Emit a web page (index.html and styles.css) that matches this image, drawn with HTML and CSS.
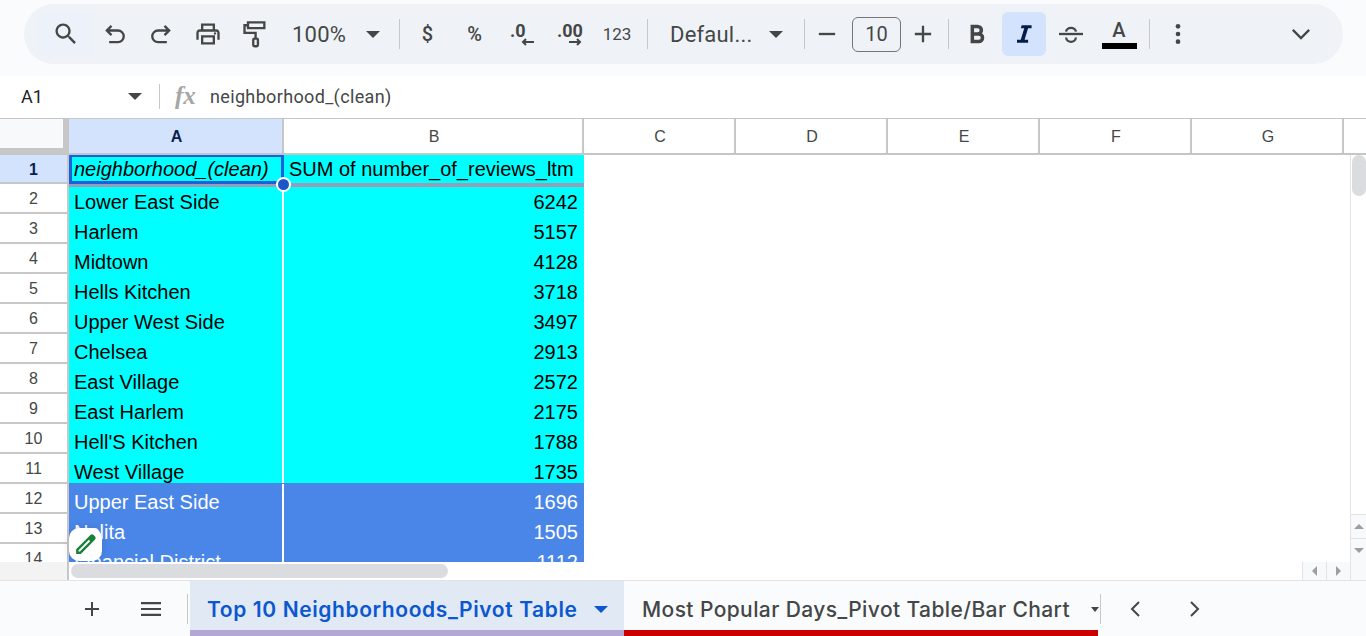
FILE: index.html
```html
<!DOCTYPE html>
<html lang="en">

<head>
    <meta charset="UTF-8">
    <title>Top 10 Neighborhoods</title>
    <link rel="stylesheet" href="styles.css">
</head>

<body>

    <div class="topBar">
        <div class="toolbar">
            <div class="btn searchBtn">
                <svg viewBox="0 0 24 24" class="icon"><path d="M15.5 14h-.79l-.28-.27C15.41 12.59 16 11.11 16 9.5 16 5.91 13.09 3 9.5 3S3 5.91 3 9.5 5.91 16 9.5 16c1.61 0 3.09-.59 4.23-1.57l.27.28v.79l5 4.99L20.49 19l-4.99-5zm-6 0C7.01 14 5 11.99 5 9.5S7.01 5 9.5 5 14 7.01 14 9.5 11.99 14 9.5 14z"/></svg>
            </div>
            <div class="btn undoBtn">
                <svg viewBox="0 0 24 24" class="icon line"><path d="M9 5L5 9l4 4M5 9h9.5a4.5 4.5 0 0 1 0 10H7"/></svg>
            </div>
            <div class="btn redoBtn">
                <svg viewBox="0 0 24 24" class="icon line"><path d="M15 5l4 4-4 4M19 9H9.500a4.500 4.500 0 0 0 0 10H17"/></svg>
            </div>
            <div class="btn printBtn">
                <svg viewBox="0 0 24 24" class="icon"><path d="M19 8h-1V3H6v5H5c-1.660 0-3 1.340-3 3v6h4v4h12v-4h4v-6c0-1.660-1.340-3-3-3zM8 5h8v3H8V5zm8 14H8v-4h8v4zm2-2v-4H6v4H4v-6c0-.55.45-1 1-1h14c.55 0 1 .45 1 1v6h-2z"/><circle cx="18" cy="11.500" r="1"/></svg>
            </div>
            <div class="btn rollerBtn">
                <svg viewBox="0 0 24 24" class="icon line"><path d="M6 2h14v5H6zM6 4.500H3V11h9.500v5"/><rect x="10.500" y="16" width="4" height="6.500" rx="1"/></svg>
            </div>
            <div class="select zoomSelect"><span>100%</span><i class="caret"></i></div>
            <div class="sep sepZoom"></div>
            <div class="btn numBtn">$</div>
            <div class="btn numBtn">%</div>
            <div class="btn numBtn decBtn"><span class="decDigits">.0</span><svg viewBox="0 0 14 8" class="decArrow"><path d="M13 4H2M5 1L2 4l3 3"/></svg></div>
            <div class="btn numBtn decBtn"><span class="decDigits">.00</span><svg viewBox="0 0 14 8" class="decArrow"><path d="M1 4h11M9 1l3 3-3 3"/></svg></div>
            <div class="btn numBtn fmtBtn">123</div>
            <div class="sep sepFmt"></div>
            <div class="select fontSelect"><span>Defaul...</span><i class="caret"></i></div>
            <div class="sep sepFont"></div>
            <div class="btn minusBtn">
                <svg viewBox="0 0 24 24" class="icon"><path d="M5 11h14v2H5z"/></svg>
            </div>
            <div class="sizeBox">10</div>
            <div class="btn plusBtn">
                <svg viewBox="0 0 24 24" class="icon"><path d="M11 5h2v6h6v2h-6v6h-2v-6H5v-2h6z"/></svg>
            </div>
            <div class="sep sepSize"></div>
            <div class="btn boldBtn">
                <svg viewBox="0 0 24 24" class="icon line thick"><path d="M8 5.500h4.500a3.250 3.250 0 0 1 0 6.500H8zM8 12h5.500a3.250 3.250 0 0 1 0 6.500H8z"/></svg>
            </div>
            <div class="btn italicBtn">
                <svg viewBox="0 0 24 24" class="icon"><path d="M10 4.500h8.500V7h-3l-3 10h3v2.500H6V17h3.200l3-10H9.300z"/></svg>
            </div>
            <div class="btn strikeBtn">
                <svg viewBox="0 0 24 24" class="icon"><path d="M1.700 11h20.600v2H1.700z"/><path class="strikeArc" d="M7.800 10C8 8 10 6.800 12 6.800s4 1.200 4.200 3.200M7.800 15c.2 2.200 2.200 3.700 4.200 3.700s4-1.500 4.200-3.700"/></svg>
            </div>
            <div class="btn colorBtn">
                <span class="colorLetter">A</span>
                <span class="colorBar"></span>
            </div>
            <div class="sep sepColor"></div>
            <div class="btn moreBtn">
                <svg viewBox="0 0 24 24" class="icon"><circle cx="12" cy="5.400" r="2"/><circle cx="12" cy="12" r="2"/><circle cx="12" cy="18.600" r="2"/></svg>
            </div>
            <div class="btn collapseBtn">
                <svg viewBox="0 0 24 24" class="icon line"><path d="M5 8.500l7 7 7-7"/></svg>
            </div>
        </div>
    </div>

    <div class="formulaBar">
        <div class="nameBox">A1</div>
        <i class="caret"></i>
        <div class="sep sepName"></div>
        <span class="fx">fx</span>
        <span class="formulaText">neighborhood_(clean)</span>
    </div>

    <div class="sheet">
        <div class="colHeads">
            <div class="corner"></div>
            <div class="colHead colA">A</div>
            <div class="colHead colB">B</div>
            <div class="colHead">C</div>
            <div class="colHead">D</div>
            <div class="colHead">E</div>
            <div class="colHead">F</div>
            <div class="colHead">G</div>
        </div>

        <div class="body">
            <div class="rowHeads">
                <div class="rowHead rowHeadFirst">1</div>
                <div class="rowHead">2</div>
                <div class="rowHead">3</div>
                <div class="rowHead">4</div>
                <div class="rowHead">5</div>
                <div class="rowHead">6</div>
                <div class="rowHead">7</div>
                <div class="rowHead">8</div>
                <div class="rowHead">9</div>
                <div class="rowHead">10</div>
                <div class="rowHead">11</div>
                <div class="rowHead">12</div>
                <div class="rowHead">13</div>
                <div class="rowHead">14</div>
            </div>

            <div class="cells">
                <div class="cell head selected"><em>neighborhood_(clean)</em></div>
                <div class="cell head">SUM of number_of_reviews_ltm</div>

                <div class="cell second">Lower East Side</div><div class="cell second num">6242</div>
                <div class="cell">Harlem</div><div class="cell num">5157</div>
                <div class="cell">Midtown</div><div class="cell num">4128</div>
                <div class="cell">Hells Kitchen</div><div class="cell num">3718</div>
                <div class="cell">Upper West Side</div><div class="cell num">3497</div>
                <div class="cell">Chelsea</div><div class="cell num">2913</div>
                <div class="cell">East Village</div><div class="cell num">2572</div>
                <div class="cell">East Harlem</div><div class="cell num">2175</div>
                <div class="cell">Hell'S Kitchen</div><div class="cell num">1788</div>
                <div class="cell">West Village</div><div class="cell num">1735</div>
                <div class="cell blue blueFirst">Upper East Side</div><div class="cell blue blueFirst num">1696</div>
                <div class="cell blue">Nolita</div><div class="cell blue num">1505</div>
                <div class="cell blue">Financial District</div><div class="cell blue num">1112</div>
            </div>

            <div class="vScroll">
                <div class="vThumb"></div>
                <div class="vArrows">
                    <div class="vArrow"><i class="tri triUp"></i></div>
                    <div class="vArrow"><i class="tri triDown"></i></div>
                </div>
            </div>

            <div class="fillHandle"></div>
            <div class="pencil">
                <svg viewBox="0 0 24 24"><path d="M3 21v-4.500L16.500 3a2.500 2.500 0 0 1 3.500 0l1 1a2.500 2.500 0 0 1 0 3.500L7.500 21zM5.300 18.700h1.300L16.500 8.800l-1.300-1.300-9.900 9.900z"/></svg>
            </div>
        </div>

        <div class="hScroll">
            <div class="hGutter"></div>
            <div class="hTrack"><div class="hThumb"></div></div>
            <div class="hArrow"><i class="tri triLeft"></i></div>
            <div class="hArrow"><i class="tri triRight"></i></div>
            <div class="hEnd"></div>
        </div>
    </div>

    <div class="tabBar">
        <div class="btn addSheet">
            <svg viewBox="0 0 24 24" class="icon"><path d="M11 5h2v6h6v2h-6v6h-2v-6H5v-2h6z"/></svg>
        </div>
        <div class="btn allSheets">
            <svg viewBox="0 0 24 24" class="icon"><path d="M2 5h20v2.200H2zM2 10.900h20v2.200H2zM2 16.800h20V19H2z"/></svg>
        </div>
        <div class="sep sepTabs"></div>
        <div class="tab tabActive">
            <span>Top 10 Neighborhoods_Pivot Table</span><i class="caret"></i>
        </div>
        <div class="tab tabOther">
            <span>Most Popular Days_Pivot Table/Bar Chart</span><i class="caret caretSmall"></i>
        </div>
        <div class="sep sepNav"></div>
        <div class="btn navBtn navFirst">
            <svg viewBox="0 0 24 24" class="icon line"><path d="M15 5l-7 7 7 7"/></svg>
        </div>
        <div class="btn navBtn">
            <svg viewBox="0 0 24 24" class="icon line"><path d="M9 5l7 7-7 7"/></svg>
        </div>
    </div>

</body>

</html>
```

FILE: styles.css
```css
* {
    box-sizing: border-box;
}

html,
body {
    margin: 0;
    height: 636px;
    overflow: hidden;
    background-color: white;
}

body {
    font-family: "Roboto", "Liberation Sans", sans-serif;
    color: #444746;
}

.icon {
    width: 24px;
    height: 24px;
    fill: #444746;
    display: block;
}

.icon.line {
    fill: none;
    stroke: #444746;
    stroke-width: 2;
}

.icon.thick {
    stroke-width: 3;
}

.caret {
    display: block;
    width: 0;
    height: 0;
    border-left: 7px solid transparent;
    border-right: 7px solid transparent;
    border-top: 7px solid #444746;
}

.sep {
    width: 1px;
    flex: none;
    background-color: #c7c7c7;
}

.btn {
    flex: none;
    display: flex;
    justify-content: center;
    align-items: center;
    height: 44px;
    width: 46px;
}

/* top toolbar */
.topBar {
    height: 76px;
    padding: 4px 23px 12px 24px;
    background-color: #f9fbfd;
}

.toolbar {
    height: 60px;
    padding-left: 14px;
    display: flex;
    align-items: center;
    background-color: #eff3f8;
    border-radius: 30px;
}

.toolbar .icon {
    width: 28px;
    height: 28px;
}

.toolbar .sep {
    height: 30px;
}

.searchBtn {
    width: 55px;
    background-color: #edf2fa;
    height: 42px;
}

.undoBtn {
    width: 44px;
}

.redoBtn,
.printBtn {
    width: 47px;
}

.rollerBtn {
    padding-left: 1px;
}

.select {
    display: flex;
    align-items: center;
    flex: none;
    font-size: 22px;
    letter-spacing: 0.2px;
}

.zoomSelect {
    width: 111px;
    padding-left: 15px;
}

.zoomSelect .caret {
    margin-left: 20px;
}

.sepZoom {
    margin: 0 4px 0 11px;
}

.numBtn {
    width: 47px;
    font-size: 20px;
    font-weight: 500;
}

.fmtBtn {
    width: 50px;
    font-size: 17px;
    font-weight: 400;
}

.decBtn {
    position: relative;
    justify-content: flex-start;
    padding-left: 12px;
}

.decDigits {
    font-size: 18px;
    font-weight: 700;
    line-height: 20px;
    margin-top: -7px;
}

.decArrow {
    position: absolute;
    right: 10px;
    bottom: 10px;
    width: 14px;
    height: 8px;
    fill: none;
    stroke: #444746;
    stroke-width: 2;
}

.sepFmt {
    margin-left: 5px;
}

.fontSelect {
    width: 156px;
    padding-left: 22px;
}

.fontSelect .caret {
    margin-left: 17px;
}

.minusBtn {
    width: 44px;
}

.sizeBox {
    flex: none;
    width: 49px;
    height: 35px;
    margin-left: 3px;
    border: 1px solid #747775;
    border-radius: 6px;
    font-size: 20px;
    line-height: 33px;
    text-align: center;
}

.plusBtn {
    width: 44px;
}

.sepSize {
    margin: 0 6px 0 3px;
}

.boldBtn,
.italicBtn,
.strikeBtn {
    width: 44px;
}

.italicBtn {
    margin: 0 3px;
    background-color: #d3e3fd;
    border-radius: 6px;
}

.italicBtn .icon {
    fill: #041e49;
}

.strikeArc {
    fill: none;
    stroke: #444746;
    stroke-width: 2;
}

.colorBtn {
    width: 44px;
    margin: 0 4px;
    flex-direction: column;
    justify-content: flex-start;
}

.colorLetter {
    font-size: 20px;
    font-weight: 500;
    line-height: 24px;
    margin-top: 6px;
}

.colorBar {
    width: 35px;
    height: 6px;
    background-color: black;
    margin-top: 1px;
}

.sepColor {
    margin: 0 6px 0 4px;
}

.moreBtn {
    width: 44px;
}

.collapseBtn {
    width: 44px;
    margin-left: auto;
    margin-right: 20px;
}

/* formula bar */
.formulaBar {
    height: 43px;
    padding-bottom: 2px;
    display: flex;
    align-items: center;
    background-color: white;
    border-bottom: 1px solid #c4c7c5;
}

.nameBox {
    width: 128px;
    padding-left: 21px;
    font-size: 18px;
    color: #1f1f1f;
    flex: none;
}

.sepName {
    height: 25px;
    margin-left: 17px;
}

.fx {
    width: 35px;
    padding-left: 15px;
    font-family: "Liberation Serif", serif;
    font-style: italic;
    font-size: 25px;
    font-weight: bold;
    color: #a6a6a6;
    flex: none;
}

.formulaText {
    font-size: 18px;
    letter-spacing: 0.35px;
    color: #444746;
    margin-left: 15px;
}

/* grid */
.sheet {
    font-family: "Liberation Sans", sans-serif;
}

.colHeads {
    height: 36px;
    display: flex;
    background-color: white;
    border-bottom: 2px solid #c4c7c5;
}

.corner {
    width: 69px;
    flex: none;
    background-color: #f8f9fa;
    border-right: 6px solid #c7c7c7;
    border-bottom: 5px solid #c7c7c7;
}

.colHead {
    width: 152px;
    flex: none;
    padding: 1px 0 0 2px;
    border-right: 2px solid #c7c7c7;
    font-size: 16px;
    line-height: 34px;
    text-align: center;
    color: #444746;
}

.colA {
    width: 215px;
    background-color: #d3e3fd;
    color: #0b1f4f;
    font-weight: bold;
}

.colB {
    width: 300px;
}

.body {
    position: relative;
    height: 407px;
    overflow: hidden;
    display: flex;
}

.rowHeads {
    width: 69px;
    flex: none;
    border-right: 2px solid #c7c7c7;
}

.rowHead {
    height: 30px;
    font-size: 16px;
    line-height: 30px;
    text-align: center;
    color: #444746;
    border-bottom: 2px solid #c7c7c7;
}

.rowHeadFirst {
    height: 29px;
    background-color: #d3e3fd;
    color: #0b1f4f;
    font-weight: bold;
}

.cells {
    width: 515px;
    flex: none;
    display: grid;
    grid-template-columns: 215px 300px;
    align-content: start;
}

.cell {
    height: 30px;
    padding: 0 6px 0 5px;
    font-size: 20px;
    line-height: 23px;
    color: black;
    background-color: aqua;
    white-space: nowrap;
    overflow: hidden;
    display: flex;
    align-items: flex-end;
}

.cell:nth-child(odd) {
    border-right: 2px solid white;
}

.cell.second {
    height: 27px;
}

.cell.head {
    height: 32px;
    line-height: 25px;
    border-bottom: 4px solid #979fb8;
    border-right: none;
    align-items: center;
}

.cell.selected {
    border: 3px solid #1a5fdb;
    border-top-width: 2px;
    height: 29px;
    margin-bottom: 3px;
    padding-left: 2px;
    box-shadow: 0 3px 0 #979fb8;
}

.cell.num {
    justify-content: flex-end;
}

.cell.blue {
    background-color: #4a86e8;
    color: white;
}

.cell.blueFirst {
    box-shadow: 0 -1px 0 #4a86e8;
}

.fillHandle {
    position: absolute;
    left: 276px;
    top: 22px;
    width: 15px;
    height: 15px;
    border: 2px solid white;
    border-radius: 50%;
    background-color: #1a56c6;
}

.pencil {
    position: absolute;
    left: 69px;
    top: 373px;
    width: 33px;
    height: 33px;
    padding: 4px;
    background-color: white;
    border-radius: 10px;
    box-shadow: 0 0 8px rgba(0, 0, 0, 0.12);
}

.pencil svg {
    display: block;
    fill: #188038;
}

.vScroll {
    width: 16px;
    margin-left: auto;
    flex: none;
    display: flex;
    flex-direction: column;
    justify-content: space-between;
    border-left: 1px solid #e3e3e3;
}

.vThumb {
    width: 14px;
    height: 41px;
    margin-left: 1px;
    border-radius: 7px;
    background-color: #dadce0;
}

.vArrows {
    background-color: #f8f9fa;
}

.vArrow {
    height: 24px;
    display: flex;
    justify-content: center;
    align-items: center;
    border-top: 1px solid #e3e3e3;
}

.tri {
    display: block;
    width: 0;
    height: 0;
}

.triUp {
    border-left: 5px solid transparent;
    border-right: 5px solid transparent;
    border-bottom: 5px solid #9e9e9e;
}

.triDown {
    border-left: 5px solid transparent;
    border-right: 5px solid transparent;
    border-top: 5px solid #9e9e9e;
}

.triLeft {
    border-top: 5px solid transparent;
    border-bottom: 5px solid transparent;
    border-right: 5px solid #9e9e9e;
}

.triRight {
    border-top: 5px solid transparent;
    border-bottom: 5px solid transparent;
    border-left: 5px solid #9e9e9e;
}

.hScroll {
    height: 19px;
    display: flex;
    border-bottom: 1px solid #e3e3e3;
}

.hGutter {
    width: 69px;
    flex: none;
    background-color: #f3f3f3;
    border-right: 2px solid #c7c7c7;
}

.hTrack {
    flex: 1;
    padding: 2px;
}

.hThumb {
    width: 377px;
    height: 14px;
    border-radius: 7px;
    background-color: #dadce0;
}

.hArrow {
    width: 24px;
    flex: none;
    display: flex;
    justify-content: center;
    align-items: center;
    background-color: #f8f9fa;
    border-left: 1px solid #e3e3e3;
}

.hEnd {
    width: 16px;
    flex: none;
    background-color: #f8f9fa;
    border-left: 1px solid #e3e3e3;
}

/* sheet tabs */
.tabBar {
    height: 55px;
    padding-left: 69px;
    display: flex;
    align-items: center;
    background-color: #f9fbfd;
    font-family: "Inter", "Roboto", sans-serif;
}

.addSheet {
    width: 46px;
}

.allSheets {
    width: 72px;
}

.sepTabs {
    height: 30px;
    margin-right: 2px;
}

.tab {
    height: 55px;
    flex: none;
    display: flex;
    align-items: center;
    padding-top: 7px;
    font-size: 21px;
    border-bottom: 6px solid transparent;
    white-space: nowrap;
}

.tabActive {
    width: 434px;
    padding-left: 17px;
    background-color: #e1e9f5;
    color: #0b57d0;
    font-weight: 600;
    letter-spacing: 0.6px;
    border-bottom-color: #b4a7d6;
}

.tabActive .caret {
    margin-left: 16px;
    border-top-color: #0b57d0;
}

.tabOther {
    width: 474px;
    padding-left: 18px;
    color: #444746;
    font-weight: 500;
    letter-spacing: 0.4px;
    border-bottom-color: #cc0000;
}

.caretSmall {
    margin-left: 21px;
    border-left-width: 4px;
    border-right-width: 4px;
    border-top-width: 5px;
}

.sepNav {
    height: 30px;
    margin-left: 2px;
}

.navBtn {
    width: 58px;
}

.navFirst {
    margin-left: 6px;
}
```
